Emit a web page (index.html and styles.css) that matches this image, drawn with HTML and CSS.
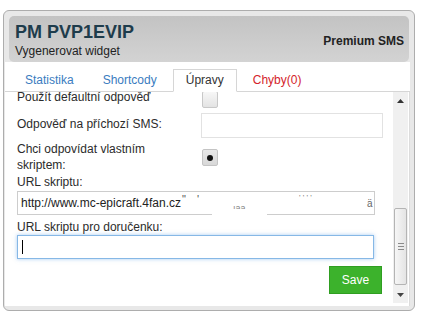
FILE: index.html
```html
<!DOCTYPE html>
<html lang="cs">
<head>
<meta charset="utf-8">
<title>PM PVP1EVIP</title>
<link rel="stylesheet" href="styles.css">
</head>
<body>
<div class="card">
  <header class="head">
    <div class="head-left">
      <h1 class="title">PM PVP1EVIP</h1>
      <div class="subtitle">Vygenerovat widget</div>
    </div>
    <div class="product">Premium SMS</div>
  </header>
  <div class="main">
    <nav class="tabs">
      <a class="tab">Statistika</a>
      <a class="tab">Shortcody</a>
      <a class="tab active">Úpravy</a>
      <a class="tab error">Chyby(0)</a>
    </nav>
    <div class="panel">
      <div class="viewport">
        <div class="content">
          <div class="row r1">
            <div class="label">Použít defaultní odpověď</div>
            <span class="check"></span>
          </div>
          <div class="row r2">
            <div class="label">Odpověď na příchozí SMS:</div>
            <div class="field short"></div>
          </div>
          <div class="row r3">
            <div class="label">Chci odpovídat vlastním skriptem:</div>
            <span class="check checked"><span class="dot"></span></span>
          </div>
          <div class="label-block url-label">URL skriptu:</div>
          <div class="field url">http://www.mc-epicraft.4fan.cz<span class="redact"><span class="frag f1">"</span><span class="frag f2">'</span><span class="frag f3">ıaa</span><span class="frag f4">' ' ' '</span><span class="frag f5">ä</span><span class="blank"></span></span></div>
          <div class="label-block label2">URL skriptu pro doručenku:</div>
          <div class="field focus"><span class="caret"></span></div>
          <div class="save-row"><button class="save">Save</button></div>
        </div>
      </div>
      <div class="scrollbar">
        <div class="sb-btn up"><svg width="7" height="4" viewBox="0 0 7 4"><polygon points="0,4 3.5,0 7,4" fill="#333"/></svg></div>
        <div class="sb-track">
          <div class="sb-thumb">
            <svg width="6" height="7" viewBox="0 0 6 7"><path d="M0 0.5H6M0 3.5H6M0 6.5H6" stroke="#8a8a8a" stroke-width="1"/></svg>
          </div>
        </div>
        <div class="sb-btn down"><svg width="7" height="4" viewBox="0 0 7 4"><polygon points="0,0 7,0 3.5,4" fill="#444"/></svg></div>
      </div>
    </div>
  </div>
</div>
</body>
</html>
```

FILE: styles.css
```css
body {
  margin: 0;
  background: #fff;
  font-family: "Liberation Sans", Arial, sans-serif;
  font-size: 12px;
  color: #333;
}

.card {
  margin: 10px 0 0 3px;
  width: 410px;
  height: 299px;
  border: 1px solid #adadad;
  border-radius: 6px;
  background: #e8e8e8;
  display: flex;
  flex-direction: column;
  overflow: hidden;
}

.head {
  margin: 5px 5px 0 5px;
  height: 46px;
  flex: none;
  box-sizing: border-box;
  padding: 6px 5px 4px 6px;
  border-radius: 5px;
  background: linear-gradient(#c3c3c3, #d3d3d3);
  display: flex;
  justify-content: space-between;
  align-items: flex-start;
}

.title {
  margin: 0;
  font-size: 18px;
  line-height: 20px;
  font-weight: bold;
  color: #1e3c4c;
}

.subtitle {
  margin-top: 2px;
  line-height: 14px;
  color: #222;
}

.product {
  padding-top: 12px;
  line-height: 14px;
  font-weight: bold;
  color: #222;
}

.main {
  margin: 0 4px 4px 1px;
  flex: 1;
  min-height: 0;
  background: #fff;
  display: flex;
  flex-direction: column;
}

.tabs {
  display: flex;
  flex: none;
  padding: 7px 0 0 7px;
  border-bottom: 1px solid #d6d6d6;
}

.tab {
  height: 23px;
  box-sizing: border-box;
  padding: 0 12px;
  border: 1px solid transparent;
  border-bottom: none;
  margin: 0 3px -1px 0;
  line-height: 21px;
  color: #3a7cc0;
}

.tab.active {
  border-color: #d6d6d6;
  border-bottom: 1px solid #fff;
  background: #fff;
  color: #333;
}

.tab.error {
  color: #d4232b;
}

.panel {
  flex: 1;
  min-height: 0;
  display: flex;
  border-right: 1px solid #dcdcdc;
}

.viewport {
  flex: 1;
  overflow: hidden;
}

.content {
  margin-top: -7px;
  padding: 0 10px 0 12px;
}

.row {
  display: flex;
  align-items: flex-start;
}

.label {
  width: 184px;
  flex: none;
  box-sizing: border-box;
  padding-right: 20px;
  line-height: 16px;
  color: #2b2b2b;
}

.check {
  width: 16px;
  height: 17px;
  flex: none;
  box-sizing: border-box;
  margin-left: 1px;
  border: 1px solid #c8c8c8;
  border-radius: 2px;
  background: linear-gradient(#f7f7f7, #e3e3e3);
  display: flex;
  align-items: center;
  justify-content: center;
}

.check.checked {
  background: linear-gradient(#e8e8e8, #d8d8d8);
  border-color: #c4c4c4;
}

.dot {
  width: 6px;
  height: 6px;
  border-radius: 50%;
  background: #111;
}

.r1 .label {
  padding-top: 4px;
}

.r1 .check {
  margin-top: 6px;
}

.r2 {
  margin-top: 5px;
}

.r2 .label {
  padding-top: 3px;
}

.r3 {
  margin-top: 3px;
}

.r3 .check {
  margin-top: 8px;
}

.label-block {
  line-height: 16px;
  color: #2b2b2b;
}

.url-label {
  margin-top: 1px;
}

.label2 {
  margin-top: 4px;
}

.field {
  height: 24px;
  box-sizing: border-box;
  border: 1px solid #cdcdcd;
  padding: 0 3px;
  line-height: 22px;
  color: #222;
  background: #fff;
  white-space: nowrap;
}

.field.short {
  width: 182px;
  height: 25px;
  border-color: #e2e2e2;
}

.field.url {
  margin-top: 1px;
  width: 358px;
  position: relative;
}

.redact {
  position: absolute;
  left: 0;
  top: 0;
  width: 100%;
  height: 100%;
}

.frag {
  position: absolute;
  color: #555;
  line-height: 12px;
}

.f1 { left: 164px; top: 1px; font-size: 11px; }
.f2 { left: 179px; top: 1px; font-size: 11px; }
.f3 { left: 215px; top: 10px; font-size: 9px; color: #888; }
.f4 { left: 281px; top: 0; font-size: 8px; color: #777; }
.f5 { left: 349px; top: 6px; font-size: 10px; color: #666; }

.blank {
  position: absolute;
  left: 194px;
  top: 17px;
  width: 55px;
  height: 9px;
  background: #fff;
}

.field.focus {
  width: 357px;
  border-color: #86b8e6;
  box-shadow: 0 0 4px rgba(95, 160, 230, 0.55);
}

.caret {
  display: block;
  width: 1px;
  height: 14px;
  margin: 4px 0 0 1px;
  background: #000;
}

.save-row {
  display: flex;
  justify-content: flex-end;
  margin-top: 7px;
  padding-right: 1px;
}

.save {
  width: 53px;
  height: 28px;
  box-sizing: border-box;
  border: 1px solid #2f9e21;
  background: #3cb22c;
  color: #fff;
  font-family: "Liberation Sans", Arial, sans-serif;
  font-size: 12px;
  padding: 0;
}

.scrollbar {
  width: 15px;
  height: 211px;
  flex: none;
  margin-right: 1px;
  background: #f0f0f0;
  display: flex;
  flex-direction: column;
}

.sb-btn {
  display: flex;
  align-items: center;
  justify-content: center;
}

.sb-btn.up {
  height: 18px;
}

.sb-btn.down {
  height: 17px;
}

.sb-track {
  flex: 1;
  display: flex;
  flex-direction: column;
  justify-content: flex-end;
}

.sb-thumb {
  width: 13px;
  height: 77px;
  box-sizing: border-box;
  margin: 0 0 1px 1px;
  border: 1px solid #b4b4b4;
  border-radius: 2px;
  background: linear-gradient(to right, #f6f6f6, #e4e4e4);
  display: flex;
  align-items: center;
  justify-content: center;
}
```
